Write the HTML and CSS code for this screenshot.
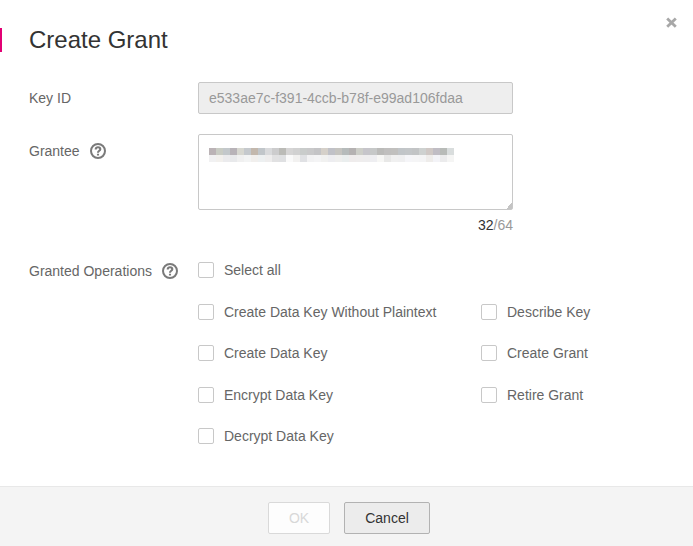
FILE: index.html
```html
<!DOCTYPE html>
<html lang="en">
<head>
<meta charset="utf-8">
<title>Create Grant</title>
<link rel="stylesheet" href="styles.css">
</head>
<body>
<main class="dialog">
  <button class="close" aria-label="Close"><svg width="11" height="11" viewBox="0 0 11 11"><path d="M1.2 1.4L9.8 9.8M9.8 1.4L1.2 9.8"/></svg></button>
  <header class="header"><h1>Create Grant</h1></header>
  <form class="form">
    <div class="row key-row">
      <div class="label"><span>Key ID</span></div>
      <div class="key-value"><span class="t-key">e533ae7c-f391-4ccb-b78f-e99ad106fdaa</span></div>
    </div>
    <div class="row grantee-row">
      <div class="label"><span>Grantee</span>
        <svg class="help" width="16" height="16" viewBox="0 0 16 16"><circle cx="8" cy="8" r="7"/><path d="M5.7 6.4C5.7 4.9 6.6 4.2 8 4.2S10.3 5 10.3 6.2C10.3 7.7 8 7.8 8 9.7M8 10.7V12.4"/></svg>
      </div>
      <div class="grantee-field">
        <div class="textarea">
          <svg class="mosaic" width="245" height="14" viewBox="0 0 35 2" preserveAspectRatio="none" shape-rendering="crispEdges"></svg>
          <i class="grip"></i>
        </div>
        <div class="counter"><b>32</b>/64</div>
      </div>
    </div>
    <div class="row operations-row">
      <div class="label"><span>Granted Operations</span>
        <svg class="help" width="16" height="16" viewBox="0 0 16 16"><circle cx="8" cy="8" r="7"/><path d="M5.7 6.4C5.7 4.9 6.6 4.2 8 4.2S10.3 5 10.3 6.2C10.3 7.7 8 7.8 8 9.7M8 10.7V12.4"/></svg>
      </div>
      <div class="options">
        <div class="option all"><i class="box"></i><span>Select all</span></div>
        <div class="option"><i class="box"></i><span>Create Data Key Without Plaintext</span></div>
        <div class="option"><i class="box"></i><span>Describe Key</span></div>
        <div class="option"><i class="box"></i><span>Create Data Key</span></div>
        <div class="option"><i class="box"></i><span>Create Grant</span></div>
        <div class="option"><i class="box"></i><span>Encrypt Data Key</span></div>
        <div class="option"><i class="box"></i><span>Retire Grant</span></div>
        <div class="option"><i class="box"></i><span>Decrypt Data Key</span></div>
      </div>
    </div>
  </form>
  <footer class="footer">
    <button class="btn ok" disabled>OK</button>
    <button class="btn cancel">Cancel</button>
  </footer>
</main>
<script src="mosaic.js"></script>
</body>
</html>
```
FILE: styles.css
```css
* { box-sizing: border-box; }
body { margin: 0; background: #fff; color: #666; font: 14px/16px "Liberation Sans", Arial, sans-serif; }
.dialog { position: relative; height: 546px; display: flex; flex-direction: column; overflow: hidden; }
.close { position: absolute; top: 17px; right: 16px; width: 11px; height: 11px; padding: 0; border: 0; background: none; }
.close svg { display: block; fill: none; stroke: #a8a8a8; stroke-width: 2.8; }
.header { height: 24px; margin-top: 28px; border-left: 2px solid #e20074; padding-left: 27px; }
h1 { margin: 0; color: #333; font-size: 24px; font-weight: 400; line-height: 24px; }
.form { flex: 1; padding: 30px 0 0 29px; }
.row { display: grid; grid-template-columns: 169px 1fr; align-items: start; }
.label { display: flex; align-items: center; gap: 10px; height: 16px; white-space: nowrap; }
.help { fill: none; stroke: #7a7a7a; stroke-width: 2; }
.help path { stroke-width: 2.1; }
.key-row { height: 52px; }
.key-row .label { margin-top: 8px; }
.key-value { width: 315px; height: 32px; padding: 7px 10px; border: 1px solid #c8c8c8; border-radius: 2px; background: #eee; color: #999; }
.grantee-row { height: 128px; }
.grantee-row .label { margin-top: 9px; }
.grantee-field { width: 315px; }
.textarea { position: relative; height: 76px; padding: 13px 10px; border: 1px solid #c8c8c8; border-radius: 2px; }
.mosaic { display: block; }
.grip { position: absolute; right: 0; bottom: 0; width: 6px; height: 6px; background: linear-gradient(135deg, transparent 50%, #c4c4c4 50%); }
.counter { margin-top: 7px; text-align: right; color: #999; }
.counter b { color: #333; font-weight: 400; }
.operations-row .label { margin-top: 1px; }
.options { display: grid; grid-template-columns: 283px 1fr; grid-auto-rows: 41.5px; }
.option { display: flex; gap: 10px; height: 16px; white-space: nowrap; }
.all { grid-column: 1 / -1; }
.box { width: 16px; height: 16px; border: 1px solid #c8c8c8; border-radius: 2px; background: #fff; }
.footer { height: 60px; padding: 15px 0 0 5px; display: flex; justify-content: center; gap: 14px; background: #f4f4f4; border-top: 1px solid #e8e8e8; }
.btn { height: 32px; padding: 0; border: 1px solid; border-radius: 2px; font: inherit; }
.ok { width: 62px; color: #d8d8d8; background: #fdfdfd; border-color: #d9d9d9; }
.cancel { width: 86px; color: #333; background: #ececec; border-color: #b2b2b2; }
```
FILE: mosaic.js
```js
// Colours of the masked grantee value, one cell per entry.
const rows = [
  "bbb3b6 c9ccc4 c3c8cb b8b3b8 d7d7d0 c5c9cd c3b8ad c1c6ca d9dadc cccccd bbbbb7 d6d5d5 d1d1d1 c9cccb c9c9ca c4c4c6 d5d0c9 c0c1c7 c5c4c0 b6bbbb b5b2b2 cdcec8 c6c5ca c6c8c8 bbbbb9 c0bfbe c1c0be c1c5c8 c3c6c8 c2c4c5 ced1d0 cfc8c5 c0bdc4 b8bbb8 d9dddd",
  "f1f1f2 f2f0ed ebebed e8e9eb f0f0f0 f3f4f4 f1efed edf0f1 eeeded e1e1e2 dfe0e2 fafafa f2f1f0 e0e1e4 f2f2f3 f4f4f5 f1f1f0 ededf0 efefee eaeeee efecec efeded eeedee eeeef1 f7f7f5 e8e8e7 f0f0f0 efeff0 f5f5f8 f5f5f6 f4f4f5 eeecea f3f3f7 ebebec f5f5f4"
];
const svg = document.querySelector(".mosaic");
rows.forEach((row, y) => row.split(" ").forEach((color, x) => {
  const cell = document.createElementNS("http://www.w3.org/2000/svg", "rect");
  for (const [name, value] of Object.entries({ x, y, width: 1, height: 1, fill: "#" + color })) cell.setAttribute(name, value);
  svg.append(cell);
}));
```
